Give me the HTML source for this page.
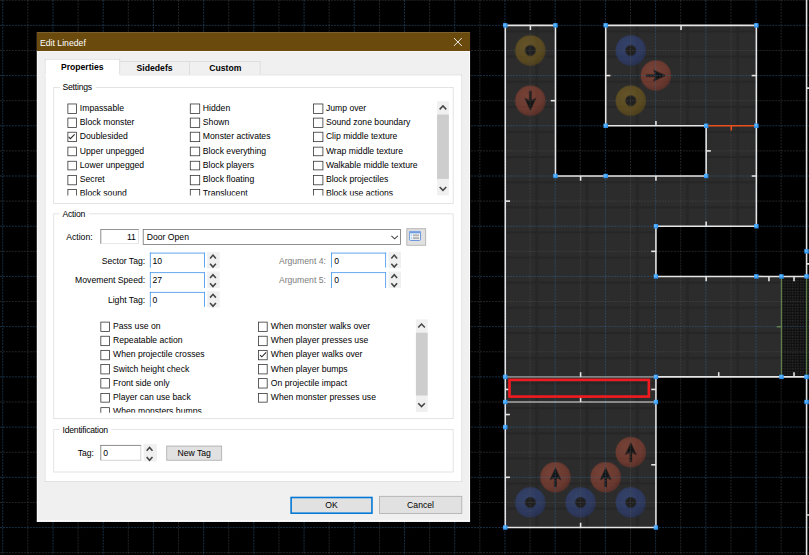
<!DOCTYPE html>
<html><head><meta charset="utf-8"><title>Edit Linedef</title>
<style>
html,body{margin:0;padding:0;background:#000;width:809px;height:555px;overflow:hidden}
#stage{position:absolute;left:0;top:0;width:1031px;height:708px;transform:scale(0.7847);transform-origin:0 0;font-family:"Liberation Sans",sans-serif;font-size:11px;color:#000}
.t{position:absolute;white-space:nowrap;line-height:13px;height:13px}
.cb{position:absolute;width:12.6px;height:12.6px;box-sizing:border-box;border:1.1px solid #333;background:#fff}
</style></head><body>
<div id="stage">
<svg width="1031" height="708" viewBox="0 0 1031 708" style="position:absolute;left:0;top:0">
<defs>
<pattern id="flr" width="64" height="32" patternUnits="userSpaceOnUse" x="682.1" y="6.8">
<rect width="64" height="32" fill="#2c2c2c"/>
<rect x="0" y="0" width="4" height="32" fill="#272727"/>
<rect x="0" y="0" width="64" height="3" fill="#262626"/>
</pattern>
<pattern id="grate" width="3.3" height="3.4" patternUnits="userSpaceOnUse" x="3" y="0">
<rect width="3.3" height="3.4" fill="#101010"/><rect x="0" y="0" width="1.7" height="1.7" fill="#2c2c2c"/>
</pattern>
<radialGradient id="gY" cx="0.4" cy="0.35" r="0.7"><stop offset="0" stop-color="#967628"/><stop offset="0.7" stop-color="#80631a"/><stop offset="1" stop-color="#644e14"/></radialGradient>
<radialGradient id="gR" cx="0.4" cy="0.35" r="0.7"><stop offset="0" stop-color="#b45642"/><stop offset="0.7" stop-color="#9d4533"/><stop offset="1" stop-color="#783428"/></radialGradient>
<radialGradient id="gB" cx="0.4" cy="0.35" r="0.7"><stop offset="0" stop-color="#3e569c"/><stop offset="0.7" stop-color="#314587"/><stop offset="1" stop-color="#263668"/></radialGradient>
</defs>
<rect width="1031" height="708" fill="#000"/>
<polygon points="643.5,32.3 707.5,32.3 707.5,224.3 899.5,224.3 899.5,160.3 771.5,160.3 771.5,32.3 963.5,32.3 963.5,288.3 835.5,288.3 835.5,352.3 995.5,352.3 995.5,480.3 835.5,480.3 835.5,672.3 643.5,672.3" fill="url(#flr)"/>
<polygon points="995.5,352.3 1033.9,352.3 1033.9,480.3 995.5,480.3" fill="url(#grate)"/>
<g opacity="0.56">
<circle cx="675.8" cy="64.3" r="19.4" fill="url(#gY)"/><circle cx="675.8" cy="64.3" r="6.9" fill="#181818"/>
<circle cx="675.8" cy="128.3" r="19.4" fill="url(#gR)"/>
<g transform="translate(675.8 128.3) rotate(90)" fill="#050505"><rect x="-12.4" y="-1.5" width="13" height="3"/><path d="M12.8 0 L-3.7 -7.6 L0 0 L-3.7 7.6 Z"/></g>
<circle cx="803.8" cy="64.3" r="19.4" fill="url(#gB)"/><circle cx="803.8" cy="64.3" r="6.9" fill="#181818"/>
<circle cx="803.8" cy="128.3" r="19.4" fill="url(#gY)"/><circle cx="803.8" cy="128.3" r="6.9" fill="#181818"/>
<circle cx="835.8" cy="96.3" r="19.4" fill="url(#gR)"/>
<g transform="translate(835.8 96.3) rotate(0)" fill="#050505"><rect x="-12.4" y="-1.5" width="13" height="3"/><path d="M12.8 0 L-3.7 -7.6 L0 0 L-3.7 7.6 Z"/></g>
<circle cx="675.8" cy="640.3" r="19.4" fill="url(#gB)"/><circle cx="675.8" cy="640.3" r="6.9" fill="#181818"/>
<circle cx="739.8" cy="640.3" r="19.4" fill="url(#gB)"/><circle cx="739.8" cy="640.3" r="6.9" fill="#181818"/>
<circle cx="803.8" cy="640.3" r="19.4" fill="url(#gB)"/><circle cx="803.8" cy="640.3" r="6.9" fill="#181818"/>
<circle cx="707.8" cy="608.3" r="19.4" fill="url(#gR)"/>
<g transform="translate(707.8 608.3) rotate(-90)" fill="#050505"><rect x="-12.4" y="-1.5" width="13" height="3"/><path d="M12.8 0 L-3.7 -7.6 L0 0 L-3.7 7.6 Z"/></g>
<circle cx="771.8" cy="608.3" r="19.4" fill="url(#gR)"/>
<g transform="translate(771.8 608.3) rotate(-90)" fill="#050505"><rect x="-12.4" y="-1.5" width="13" height="3"/><path d="M12.8 0 L-3.7 -7.6 L0 0 L-3.7 7.6 Z"/></g>
<circle cx="803.8" cy="576.3" r="19.4" fill="url(#gR)"/>
<g transform="translate(803.8 576.3) rotate(-90)" fill="#050505"><rect x="-12.4" y="-1.5" width="13" height="3"/><path d="M12.8 0 L-3.7 -7.6 L0 0 L-3.7 7.6 Z"/></g>
</g>
<line x1="3.5" y1="0" x2="3.5" y2="708" stroke="#366c9a" stroke-opacity="0.57" stroke-width="1" stroke-dasharray="2.5 1.3"/>
<line x1="35.5" y1="0" x2="35.5" y2="708" stroke="#515151" stroke-opacity="0.57" stroke-width="1" stroke-dasharray="2.5 1.3"/>
<line x1="67.5" y1="0" x2="67.5" y2="708" stroke="#366c9a" stroke-opacity="0.57" stroke-width="1" stroke-dasharray="2.5 1.3"/>
<line x1="99.5" y1="0" x2="99.5" y2="708" stroke="#515151" stroke-opacity="0.57" stroke-width="1" stroke-dasharray="2.5 1.3"/>
<line x1="131.5" y1="0" x2="131.5" y2="708" stroke="#366c9a" stroke-opacity="0.57" stroke-width="1" stroke-dasharray="2.5 1.3"/>
<line x1="163.5" y1="0" x2="163.5" y2="708" stroke="#515151" stroke-opacity="0.57" stroke-width="1" stroke-dasharray="2.5 1.3"/>
<line x1="195.5" y1="0" x2="195.5" y2="708" stroke="#366c9a" stroke-opacity="0.57" stroke-width="1" stroke-dasharray="2.5 1.3"/>
<line x1="227.5" y1="0" x2="227.5" y2="708" stroke="#515151" stroke-opacity="0.57" stroke-width="1" stroke-dasharray="2.5 1.3"/>
<line x1="259.5" y1="0" x2="259.5" y2="708" stroke="#366c9a" stroke-opacity="0.57" stroke-width="1" stroke-dasharray="2.5 1.3"/>
<line x1="291.5" y1="0" x2="291.5" y2="708" stroke="#515151" stroke-opacity="0.57" stroke-width="1" stroke-dasharray="2.5 1.3"/>
<line x1="323.5" y1="0" x2="323.5" y2="708" stroke="#366c9a" stroke-opacity="0.57" stroke-width="1" stroke-dasharray="2.5 1.3"/>
<line x1="355.5" y1="0" x2="355.5" y2="708" stroke="#515151" stroke-opacity="0.57" stroke-width="1" stroke-dasharray="2.5 1.3"/>
<line x1="387.5" y1="0" x2="387.5" y2="708" stroke="#366c9a" stroke-opacity="0.57" stroke-width="1" stroke-dasharray="2.5 1.3"/>
<line x1="419.5" y1="0" x2="419.5" y2="708" stroke="#515151" stroke-opacity="0.57" stroke-width="1" stroke-dasharray="2.5 1.3"/>
<line x1="451.5" y1="0" x2="451.5" y2="708" stroke="#366c9a" stroke-opacity="0.57" stroke-width="1" stroke-dasharray="2.5 1.3"/>
<line x1="483.5" y1="0" x2="483.5" y2="708" stroke="#515151" stroke-opacity="0.57" stroke-width="1" stroke-dasharray="2.5 1.3"/>
<line x1="515.5" y1="0" x2="515.5" y2="708" stroke="#366c9a" stroke-opacity="0.57" stroke-width="1" stroke-dasharray="2.5 1.3"/>
<line x1="547.5" y1="0" x2="547.5" y2="708" stroke="#515151" stroke-opacity="0.57" stroke-width="1" stroke-dasharray="2.5 1.3"/>
<line x1="579.5" y1="0" x2="579.5" y2="708" stroke="#366c9a" stroke-opacity="0.57" stroke-width="1" stroke-dasharray="2.5 1.3"/>
<line x1="611.5" y1="0" x2="611.5" y2="708" stroke="#515151" stroke-opacity="0.57" stroke-width="1" stroke-dasharray="2.5 1.3"/>
<line x1="643.5" y1="0" x2="643.5" y2="708" stroke="#366c9a" stroke-opacity="0.57" stroke-width="1" stroke-dasharray="2.5 1.3"/>
<line x1="675.5" y1="0" x2="675.5" y2="708" stroke="#515151" stroke-opacity="0.57" stroke-width="1" stroke-dasharray="2.5 1.3"/>
<line x1="707.5" y1="0" x2="707.5" y2="708" stroke="#366c9a" stroke-opacity="0.57" stroke-width="1" stroke-dasharray="2.5 1.3"/>
<line x1="739.5" y1="0" x2="739.5" y2="708" stroke="#515151" stroke-opacity="0.57" stroke-width="1" stroke-dasharray="2.5 1.3"/>
<line x1="771.5" y1="0" x2="771.5" y2="708" stroke="#366c9a" stroke-opacity="0.57" stroke-width="1" stroke-dasharray="2.5 1.3"/>
<line x1="803.5" y1="0" x2="803.5" y2="708" stroke="#515151" stroke-opacity="0.57" stroke-width="1" stroke-dasharray="2.5 1.3"/>
<line x1="835.5" y1="0" x2="835.5" y2="708" stroke="#366c9a" stroke-opacity="0.57" stroke-width="1" stroke-dasharray="2.5 1.3"/>
<line x1="867.5" y1="0" x2="867.5" y2="708" stroke="#515151" stroke-opacity="0.57" stroke-width="1" stroke-dasharray="2.5 1.3"/>
<line x1="899.5" y1="0" x2="899.5" y2="708" stroke="#366c9a" stroke-opacity="0.57" stroke-width="1" stroke-dasharray="2.5 1.3"/>
<line x1="931.5" y1="0" x2="931.5" y2="708" stroke="#515151" stroke-opacity="0.57" stroke-width="1" stroke-dasharray="2.5 1.3"/>
<line x1="963.5" y1="0" x2="963.5" y2="708" stroke="#366c9a" stroke-opacity="0.57" stroke-width="1" stroke-dasharray="2.5 1.3"/>
<line x1="995.5" y1="0" x2="995.5" y2="708" stroke="#515151" stroke-opacity="0.57" stroke-width="1" stroke-dasharray="2.5 1.3"/>
<line x1="1027.5" y1="0" x2="1027.5" y2="708" stroke="#366c9a" stroke-opacity="0.57" stroke-width="1" stroke-dasharray="2.5 1.3"/>
<line x1="1059.5" y1="0" x2="1059.5" y2="708" stroke="#515151" stroke-opacity="0.57" stroke-width="1" stroke-dasharray="2.5 1.3"/>
<line x1="0" y1="0.3" x2="1031" y2="0.3" stroke="#515151" stroke-opacity="0.57" stroke-width="1" stroke-dasharray="2.5 1.3"/>
<line x1="0" y1="32.3" x2="1031" y2="32.3" stroke="#366c9a" stroke-opacity="0.57" stroke-width="1" stroke-dasharray="2.5 1.3"/>
<line x1="0" y1="64.3" x2="1031" y2="64.3" stroke="#515151" stroke-opacity="0.57" stroke-width="1" stroke-dasharray="2.5 1.3"/>
<line x1="0" y1="96.3" x2="1031" y2="96.3" stroke="#366c9a" stroke-opacity="0.57" stroke-width="1" stroke-dasharray="2.5 1.3"/>
<line x1="0" y1="128.3" x2="1031" y2="128.3" stroke="#515151" stroke-opacity="0.57" stroke-width="1" stroke-dasharray="2.5 1.3"/>
<line x1="0" y1="160.3" x2="1031" y2="160.3" stroke="#366c9a" stroke-opacity="0.57" stroke-width="1" stroke-dasharray="2.5 1.3"/>
<line x1="0" y1="192.3" x2="1031" y2="192.3" stroke="#515151" stroke-opacity="0.57" stroke-width="1" stroke-dasharray="2.5 1.3"/>
<line x1="0" y1="224.3" x2="1031" y2="224.3" stroke="#366c9a" stroke-opacity="0.57" stroke-width="1" stroke-dasharray="2.5 1.3"/>
<line x1="0" y1="256.3" x2="1031" y2="256.3" stroke="#515151" stroke-opacity="0.57" stroke-width="1" stroke-dasharray="2.5 1.3"/>
<line x1="0" y1="288.3" x2="1031" y2="288.3" stroke="#366c9a" stroke-opacity="0.57" stroke-width="1" stroke-dasharray="2.5 1.3"/>
<line x1="0" y1="320.3" x2="1031" y2="320.3" stroke="#515151" stroke-opacity="0.57" stroke-width="1" stroke-dasharray="2.5 1.3"/>
<line x1="0" y1="352.3" x2="1031" y2="352.3" stroke="#366c9a" stroke-opacity="0.57" stroke-width="1" stroke-dasharray="2.5 1.3"/>
<line x1="0" y1="384.3" x2="1031" y2="384.3" stroke="#515151" stroke-opacity="0.57" stroke-width="1" stroke-dasharray="2.5 1.3"/>
<line x1="0" y1="416.3" x2="1031" y2="416.3" stroke="#366c9a" stroke-opacity="0.57" stroke-width="1" stroke-dasharray="2.5 1.3"/>
<line x1="0" y1="448.3" x2="1031" y2="448.3" stroke="#515151" stroke-opacity="0.57" stroke-width="1" stroke-dasharray="2.5 1.3"/>
<line x1="0" y1="480.3" x2="1031" y2="480.3" stroke="#366c9a" stroke-opacity="0.57" stroke-width="1" stroke-dasharray="2.5 1.3"/>
<line x1="0" y1="512.3" x2="1031" y2="512.3" stroke="#515151" stroke-opacity="0.57" stroke-width="1" stroke-dasharray="2.5 1.3"/>
<line x1="0" y1="544.3" x2="1031" y2="544.3" stroke="#366c9a" stroke-opacity="0.57" stroke-width="1" stroke-dasharray="2.5 1.3"/>
<line x1="0" y1="576.3" x2="1031" y2="576.3" stroke="#515151" stroke-opacity="0.57" stroke-width="1" stroke-dasharray="2.5 1.3"/>
<line x1="0" y1="608.3" x2="1031" y2="608.3" stroke="#366c9a" stroke-opacity="0.57" stroke-width="1" stroke-dasharray="2.5 1.3"/>
<line x1="0" y1="640.3" x2="1031" y2="640.3" stroke="#515151" stroke-opacity="0.57" stroke-width="1" stroke-dasharray="2.5 1.3"/>
<line x1="0" y1="672.3" x2="1031" y2="672.3" stroke="#366c9a" stroke-opacity="0.57" stroke-width="1" stroke-dasharray="2.5 1.3"/>
<line x1="0" y1="704.3" x2="1031" y2="704.3" stroke="#515151" stroke-opacity="0.57" stroke-width="1" stroke-dasharray="2.5 1.3"/>
<line x1="0" y1="736.3" x2="1031" y2="736.3" stroke="#366c9a" stroke-opacity="0.57" stroke-width="1" stroke-dasharray="2.5 1.3"/>
<line x1="643.9" y1="32.3" x2="707.9" y2="32.3" stroke="#e6e6e6" stroke-width="2"/>
<line x1="707.9" y1="32.3" x2="707.9" y2="224.3" stroke="#e6e6e6" stroke-width="2"/>
<line x1="707.9" y1="224.3" x2="771.9" y2="224.3" stroke="#e6e6e6" stroke-width="2"/>
<line x1="771.9" y1="224.3" x2="899.9" y2="224.3" stroke="#e6e6e6" stroke-width="2"/>
<line x1="899.9" y1="224.3" x2="899.9" y2="160.3" stroke="#e6e6e6" stroke-width="2"/>
<line x1="771.9" y1="160.3" x2="899.9" y2="160.3" stroke="#e6e6e6" stroke-width="2"/>
<line x1="771.9" y1="32.3" x2="771.9" y2="160.3" stroke="#e6e6e6" stroke-width="2"/>
<line x1="771.9" y1="32.3" x2="963.9" y2="32.3" stroke="#e6e6e6" stroke-width="2"/>
<line x1="963.9" y1="32.3" x2="963.9" y2="160.3" stroke="#e6e6e6" stroke-width="2"/>
<line x1="963.9" y1="160.3" x2="963.9" y2="288.3" stroke="#e6e6e6" stroke-width="2"/>
<line x1="835.9" y1="288.3" x2="963.9" y2="288.3" stroke="#e6e6e6" stroke-width="2"/>
<line x1="835.9" y1="288.3" x2="835.9" y2="352.3" stroke="#e6e6e6" stroke-width="2"/>
<line x1="835.9" y1="352.3" x2="963.9" y2="352.3" stroke="#e6e6e6" stroke-width="2"/>
<line x1="963.9" y1="352.3" x2="995.9" y2="352.3" stroke="#e6e6e6" stroke-width="2"/>
<line x1="995.9" y1="352.3" x2="1027.9" y2="352.3" stroke="#e6e6e6" stroke-width="2"/>
<line x1="1027.9" y1="-31.7" x2="1027.9" y2="320.3" stroke="#e6e6e6" stroke-width="2"/>
<line x1="1027.9" y1="320.3" x2="1027.9" y2="352.3" stroke="#e6e6e6" stroke-width="2"/>
<line x1="835.9" y1="480.3" x2="995.9" y2="480.3" stroke="#e6e6e6" stroke-width="2"/>
<line x1="995.9" y1="480.3" x2="1027.9" y2="480.3" stroke="#e6e6e6" stroke-width="2"/>
<line x1="1027.9" y1="480.3" x2="1027.9" y2="512.3" stroke="#e6e6e6" stroke-width="2"/>
<line x1="1027.9" y1="512.3" x2="1027.9" y2="736.3" stroke="#e6e6e6" stroke-width="2"/>
<line x1="643.9" y1="32.3" x2="643.9" y2="480.3" stroke="#e6e6e6" stroke-width="2"/>
<line x1="643.9" y1="480.3" x2="643.9" y2="512.3" stroke="#e6e6e6" stroke-width="2"/>
<line x1="643.9" y1="512.3" x2="643.9" y2="544.3" stroke="#e6e6e6" stroke-width="2"/>
<line x1="643.9" y1="544.3" x2="643.9" y2="672.3" stroke="#e6e6e6" stroke-width="2"/>
<line x1="835.9" y1="480.3" x2="835.9" y2="512.3" stroke="#e6e6e6" stroke-width="2"/>
<line x1="835.9" y1="512.3" x2="835.9" y2="672.3" stroke="#e6e6e6" stroke-width="2"/>
<line x1="643.9" y1="672.3" x2="835.9" y2="672.3" stroke="#e6e6e6" stroke-width="2"/>
<line x1="899.9" y1="160.3" x2="963.9" y2="160.3" stroke="#e8501c" stroke-width="2"/>
<line x1="643.9" y1="480.3" x2="835.9" y2="480.3" stroke="#808585" stroke-width="2.4"/>
<line x1="643.9" y1="512.3" x2="835.9" y2="512.3" stroke="#a8a8a8" stroke-width="1.7"/>
<line x1="995.9" y1="352.3" x2="995.9" y2="480.3" stroke="#5f7f4c" stroke-width="1.6"/>
<line x1="1027.9" y1="352.3" x2="1027.9" y2="480.3" stroke="#5f7f4c" stroke-width="1.6"/>
<line x1="675.9" y1="32.3" x2="675.9" y2="38.3" stroke="#e6e6e6" stroke-width="2"/>
<line x1="707.9" y1="128.3" x2="701.9" y2="128.3" stroke="#e6e6e6" stroke-width="2"/>
<line x1="739.9" y1="224.3" x2="739.9" y2="230.3" stroke="#e6e6e6" stroke-width="2"/>
<line x1="835.9" y1="224.3" x2="835.9" y2="230.3" stroke="#e6e6e6" stroke-width="2"/>
<line x1="899.9" y1="192.3" x2="905.9" y2="192.3" stroke="#e6e6e6" stroke-width="2"/>
<line x1="835.9" y1="160.3" x2="835.9" y2="154.3" stroke="#e6e6e6" stroke-width="2"/>
<line x1="771.9" y1="96.3" x2="777.9" y2="96.3" stroke="#e6e6e6" stroke-width="2"/>
<line x1="867.9" y1="32.3" x2="867.9" y2="38.3" stroke="#e6e6e6" stroke-width="2"/>
<line x1="963.9" y1="96.3" x2="957.9" y2="96.3" stroke="#e6e6e6" stroke-width="2"/>
<line x1="963.9" y1="224.3" x2="957.9" y2="224.3" stroke="#e6e6e6" stroke-width="2"/>
<line x1="899.9" y1="288.3" x2="899.9" y2="282.3" stroke="#e6e6e6" stroke-width="2"/>
<line x1="835.9" y1="320.3" x2="829.9" y2="320.3" stroke="#e6e6e6" stroke-width="2"/>
<line x1="899.9" y1="352.3" x2="899.9" y2="358.3" stroke="#e6e6e6" stroke-width="2"/>
<line x1="979.9" y1="352.3" x2="979.9" y2="358.3" stroke="#e6e6e6" stroke-width="2"/>
<line x1="1011.9" y1="352.3" x2="1011.9" y2="358.3" stroke="#e6e6e6" stroke-width="2"/>
<line x1="1027.9" y1="112.3" x2="1033.9" y2="112.3" stroke="#e6e6e6" stroke-width="2"/>
<line x1="1027.9" y1="336.3" x2="1033.9" y2="336.3" stroke="#e6e6e6" stroke-width="2"/>
<line x1="739.9" y1="480.3" x2="739.9" y2="474.3" stroke="#e6e6e6" stroke-width="2"/>
<line x1="915.9" y1="480.3" x2="915.9" y2="474.3" stroke="#e6e6e6" stroke-width="2"/>
<line x1="1011.9" y1="480.3" x2="1011.9" y2="474.3" stroke="#e6e6e6" stroke-width="2"/>
<line x1="643.9" y1="256.3" x2="649.9" y2="256.3" stroke="#e6e6e6" stroke-width="2"/>
<line x1="643.9" y1="528.3" x2="649.9" y2="528.3" stroke="#e6e6e6" stroke-width="2"/>
<line x1="643.9" y1="608.3" x2="649.9" y2="608.3" stroke="#e6e6e6" stroke-width="2"/>
<line x1="739.9" y1="512.3" x2="739.9" y2="506.3" stroke="#e6e6e6" stroke-width="2"/>
<line x1="643.9" y1="496.3" x2="649.9" y2="496.3" stroke="#e6e6e6" stroke-width="2"/>
<line x1="835.9" y1="496.3" x2="829.9" y2="496.3" stroke="#e6e6e6" stroke-width="2"/>
<line x1="835.9" y1="592.3" x2="829.9" y2="592.3" stroke="#e6e6e6" stroke-width="2"/>
<line x1="739.9" y1="672.3" x2="739.9" y2="666.3" stroke="#e6e6e6" stroke-width="2"/>
<line x1="1027.9" y1="656.3" x2="1033.9" y2="656.3" stroke="#e6e6e6" stroke-width="2"/>
<line x1="931.9" y1="160.3" x2="931.9" y2="166.3" stroke="#e8501c" stroke-width="2"/>
<line x1="995.9" y1="416.3" x2="989.9" y2="416.3" stroke="#5f7f4c" stroke-width="2"/>
<rect x="649.3" y="484.1" width="177.6" height="21.3" fill="none" stroke="#ee1c20" stroke-width="3.4"/>
<rect x="641.1" y="29.5" width="5.6" height="5.6" fill="#2f93ee"/>
<rect x="641.5" y="29.9" width="3.4" height="3.4" fill="#5cb6ff"/>
<rect x="705.1" y="29.5" width="5.6" height="5.6" fill="#2f93ee"/>
<rect x="705.5" y="29.9" width="3.4" height="3.4" fill="#5cb6ff"/>
<rect x="769.1" y="29.5" width="5.6" height="5.6" fill="#2f93ee"/>
<rect x="769.5" y="29.9" width="3.4" height="3.4" fill="#5cb6ff"/>
<rect x="961.1" y="29.5" width="5.6" height="5.6" fill="#2f93ee"/>
<rect x="961.5" y="29.9" width="3.4" height="3.4" fill="#5cb6ff"/>
<rect x="769.1" y="157.5" width="5.6" height="5.6" fill="#2f93ee"/>
<rect x="769.5" y="157.9" width="3.4" height="3.4" fill="#5cb6ff"/>
<rect x="897.1" y="157.5" width="5.6" height="5.6" fill="#2f93ee"/>
<rect x="897.5" y="157.9" width="3.4" height="3.4" fill="#5cb6ff"/>
<rect x="961.1" y="157.5" width="5.6" height="5.6" fill="#2f93ee"/>
<rect x="961.5" y="157.9" width="3.4" height="3.4" fill="#5cb6ff"/>
<rect x="705.1" y="221.5" width="5.6" height="5.6" fill="#2f93ee"/>
<rect x="705.5" y="221.9" width="3.4" height="3.4" fill="#5cb6ff"/>
<rect x="769.1" y="221.5" width="5.6" height="5.6" fill="#2f93ee"/>
<rect x="769.5" y="221.9" width="3.4" height="3.4" fill="#5cb6ff"/>
<rect x="897.1" y="221.5" width="5.6" height="5.6" fill="#2f93ee"/>
<rect x="897.5" y="221.9" width="3.4" height="3.4" fill="#5cb6ff"/>
<rect x="833.1" y="285.5" width="5.6" height="5.6" fill="#2f93ee"/>
<rect x="833.5" y="285.9" width="3.4" height="3.4" fill="#5cb6ff"/>
<rect x="961.1" y="285.5" width="5.6" height="5.6" fill="#2f93ee"/>
<rect x="961.5" y="285.9" width="3.4" height="3.4" fill="#5cb6ff"/>
<rect x="1025.1" y="317.5" width="5.6" height="5.6" fill="#2f93ee"/>
<rect x="1025.5" y="317.9" width="3.4" height="3.4" fill="#5cb6ff"/>
<rect x="833.1" y="349.5" width="5.6" height="5.6" fill="#2f93ee"/>
<rect x="833.5" y="349.9" width="3.4" height="3.4" fill="#5cb6ff"/>
<rect x="961.1" y="349.5" width="5.6" height="5.6" fill="#2f93ee"/>
<rect x="961.5" y="349.9" width="3.4" height="3.4" fill="#5cb6ff"/>
<rect x="993.1" y="349.5" width="5.6" height="5.6" fill="#2f93ee"/>
<rect x="993.5" y="349.9" width="3.4" height="3.4" fill="#5cb6ff"/>
<rect x="1025.1" y="349.5" width="5.6" height="5.6" fill="#2f93ee"/>
<rect x="1025.5" y="349.9" width="3.4" height="3.4" fill="#5cb6ff"/>
<rect x="641.1" y="477.5" width="5.6" height="5.6" fill="#2f93ee"/>
<rect x="641.5" y="477.9" width="3.4" height="3.4" fill="#5cb6ff"/>
<rect x="833.1" y="477.5" width="5.6" height="5.6" fill="#2f93ee"/>
<rect x="833.5" y="477.9" width="3.4" height="3.4" fill="#5cb6ff"/>
<rect x="993.1" y="477.5" width="5.6" height="5.6" fill="#2f93ee"/>
<rect x="993.5" y="477.9" width="3.4" height="3.4" fill="#5cb6ff"/>
<rect x="1025.1" y="477.5" width="5.6" height="5.6" fill="#2f93ee"/>
<rect x="1025.5" y="477.9" width="3.4" height="3.4" fill="#5cb6ff"/>
<rect x="641.1" y="509.5" width="5.6" height="5.6" fill="#2f93ee"/>
<rect x="641.5" y="509.9" width="3.4" height="3.4" fill="#5cb6ff"/>
<rect x="833.1" y="509.5" width="5.6" height="5.6" fill="#2f93ee"/>
<rect x="833.5" y="509.9" width="3.4" height="3.4" fill="#5cb6ff"/>
<rect x="1025.1" y="509.5" width="5.6" height="5.6" fill="#2f93ee"/>
<rect x="1025.5" y="509.9" width="3.4" height="3.4" fill="#5cb6ff"/>
<rect x="641.1" y="541.5" width="5.6" height="5.6" fill="#2f93ee"/>
<rect x="641.5" y="541.9" width="3.4" height="3.4" fill="#5cb6ff"/>
<rect x="641.1" y="669.5" width="5.6" height="5.6" fill="#2f93ee"/>
<rect x="641.5" y="669.9" width="3.4" height="3.4" fill="#5cb6ff"/>
<rect x="833.1" y="669.5" width="5.6" height="5.6" fill="#2f93ee"/>
<rect x="833.5" y="669.9" width="3.4" height="3.4" fill="#5cb6ff"/>
</svg>
<div style="position:absolute;left:46.8px;top:40.6px;width:552.6px;height:624.1px;background:#f0f0f0"></div>
<div style="position:absolute;left:46.8px;top:64.8px;width:1.1px;height:599.9px;background:#fff"></div>
<div style="position:absolute;left:598.3px;top:64.8px;width:1.1px;height:599.9px;background:#fff"></div>
<div style="position:absolute;left:46.8px;top:663.3px;width:552.6px;height:1.4px;background:#fdfdfd"></div>
<div style="position:absolute;left:46.8px;top:64.8px;width:552.6px;height:1.0px;background:#fbfbfb"></div>
<div style="position:absolute;left:46.8px;top:40.6px;width:552.6px;height:24.2px;background:#6b4a0e"></div>
<div class="t" style="left:50.8px;top:46.1px;color:#fff;font-size:12.6px;line-height:16px;height:16px;transform:scaleX(0.877);transform-origin:0 0">Edit Linedef</div>
<svg style="position:absolute;left:577.7px;top:47.6px" width="11" height="11" viewBox="0 0 11 11"><path d="M0.5 0.5 L10.5 10.5 M10.5 0.5 L0.5 10.5" stroke="#fff" stroke-width="1.15" fill="none"/></svg>
<div style="position:absolute;left:56.8px;top:94.6px;width:531.8px;height:519.8px;background:#fff;border:1px solid #dadada;border-top:none;box-sizing:border-box"></div>
<div style="position:absolute;left:152.6px;top:94.6px;width:436.0px;height:1.0px;background:#dadada"></div>
<div style="position:absolute;left:152.0px;top:78.0px;width:90.0px;height:16.7px;background:#f0f0f0;border:1px solid #d9d9d9;border-bottom:none;box-sizing:border-box"></div>
<div style="position:absolute;left:241.0px;top:78.0px;width:91.0px;height:16.7px;background:#f0f0f0;border:1px solid #d9d9d9;border-bottom:none;box-sizing:border-box"></div>
<div style="position:absolute;left:56.8px;top:75.4px;width:96.0px;height:19.8px;background:#fff;border:1px solid #d9d9d9;border-bottom:none;box-sizing:border-box"></div>
<div style="position:absolute;left:57.8px;top:93.6px;width:94.0px;height:4.0px;background:#fff"></div>
<div class="t" style="left:56.8px;top:79.4px;width:96px;text-align:center;font-weight:bold">Properties</div>
<div class="t" style="left:152.0px;top:80.4px;width:90px;text-align:center;font-weight:bold">Sidedefs</div>
<div class="t" style="left:241.6px;top:80.4px;width:91px;text-align:center;font-weight:bold">Custom</div>
<div style="position:absolute;left:68.0px;top:110.6px;width:509.6px;height:149.8px;border:1px solid #dcdcdc;box-sizing:border-box"></div>
<div style="position:absolute;left:76.0px;top:104.6px;width:46.0px;height:13.0px;background:#fff"></div>
<div class="t" style="left:79.6px;top:105.3px;letter-spacing:-0.28px">Settings</div>
<div style="position:absolute;left:68.0px;top:272.4px;width:509.6px;height:262.0px;border:1px solid #dcdcdc;box-sizing:border-box"></div>
<div style="position:absolute;left:76.0px;top:266.4px;width:37.0px;height:13.0px;background:#fff"></div>
<div class="t" style="left:79.6px;top:267.1px;letter-spacing:-0.28px">Action</div>
<div style="position:absolute;left:68.0px;top:546.7px;width:509.6px;height:55.8px;border:1px solid #dcdcdc;box-sizing:border-box"></div>
<div style="position:absolute;left:76.0px;top:540.7px;width:66.0px;height:13.0px;background:#fff"></div>
<div class="t" style="left:79.6px;top:542.2px;letter-spacing:-0.28px">Identification</div>
<div style="position:absolute;left:80px;top:125px;width:492px;height:124.0px;overflow:hidden">
<div class="cb" style="left:5.5px;top:7.0px"></div>
<div class="t" style="left:21.7px;top:6.0px;">Impassable</div>
<div class="cb" style="left:162.3px;top:7.0px"></div>
<div class="t" style="left:178.5px;top:6.0px;">Hidden</div>
<div class="cb" style="left:319.1px;top:7.0px"></div>
<div class="t" style="left:335.3px;top:6.0px;">Jump over</div>
<div class="cb" style="left:5.5px;top:25.2px"></div>
<div class="t" style="left:21.7px;top:24.2px;">Block monster</div>
<div class="cb" style="left:162.3px;top:25.2px"></div>
<div class="t" style="left:178.5px;top:24.2px;">Shown</div>
<div class="cb" style="left:319.1px;top:25.2px"></div>
<div class="t" style="left:335.3px;top:24.2px;">Sound zone boundary</div>
<div class="cb" style="left:5.5px;top:43.4px"><svg width="12.6" height="12.6" viewBox="0 0 12.6 12.6" style="position:absolute;left:-1.1px;top:-1.1px"><path d="M2.4 6.5 L4.7 8.7 L10.1 3.1" stroke="#2c2c2c" stroke-width="1.35" fill="none"/></svg></div>
<div class="t" style="left:21.7px;top:42.4px;">Doublesided</div>
<div class="cb" style="left:162.3px;top:43.4px"></div>
<div class="t" style="left:178.5px;top:42.4px;">Monster activates</div>
<div class="cb" style="left:319.1px;top:43.4px"></div>
<div class="t" style="left:335.3px;top:42.4px;">Clip middle texture</div>
<div class="cb" style="left:5.5px;top:61.6px"></div>
<div class="t" style="left:21.7px;top:60.6px;">Upper unpegged</div>
<div class="cb" style="left:162.3px;top:61.6px"></div>
<div class="t" style="left:178.5px;top:60.6px;">Block everything</div>
<div class="cb" style="left:319.1px;top:61.6px"></div>
<div class="t" style="left:335.3px;top:60.6px;">Wrap middle texture</div>
<div class="cb" style="left:5.5px;top:79.8px"></div>
<div class="t" style="left:21.7px;top:78.8px;">Lower unpegged</div>
<div class="cb" style="left:162.3px;top:79.8px"></div>
<div class="t" style="left:178.5px;top:78.8px;">Block players</div>
<div class="cb" style="left:319.1px;top:79.8px"></div>
<div class="t" style="left:335.3px;top:78.8px;">Walkable middle texture</div>
<div class="cb" style="left:5.5px;top:98.0px"></div>
<div class="t" style="left:21.7px;top:97.0px;">Secret</div>
<div class="cb" style="left:162.3px;top:98.0px"></div>
<div class="t" style="left:178.5px;top:97.0px;">Block floating</div>
<div class="cb" style="left:319.1px;top:98.0px"></div>
<div class="t" style="left:335.3px;top:97.0px;">Block projectiles</div>
<div class="cb" style="left:5.5px;top:116.2px"></div>
<div class="t" style="left:21.7px;top:115.2px;">Block sound</div>
<div class="cb" style="left:162.3px;top:116.2px"></div>
<div class="t" style="left:178.5px;top:115.2px;">Translucent</div>
<div class="cb" style="left:319.1px;top:116.2px"></div>
<div class="t" style="left:335.3px;top:115.2px;">Block use actions</div>
</div>
<div style="position:absolute;left:557.0px;top:129.4px;width:15.0px;height:119.6px;background:#f0f0f0"></div>
<div style="position:absolute;left:557.0px;top:146.2px;width:15.0px;height:81.5px;background:#cdcdcd"></div>
<svg style="position:absolute;left:557.0px;top:129.4px;overflow:visible" width="15.0" height="119.6"><path d="M3.3 10.4 L7.5 6.0 L11.7 10.4" stroke="#454545" stroke-width="1.9" fill="none"/><path d="M3.3 109.2 L7.5 113.6 L11.7 109.2" stroke="#454545" stroke-width="1.9" fill="none"/></svg>
<div class="t" style="left:84.4px;top:295.5px;">Action:</div>
<div style="position:absolute;left:127.8px;top:292.0px;width:49.4px;height:19.4px;border-style:solid;border-width:1.5px 1px 1px 1.9px;border-color:#767676 #dadada #e2e2e2 #6a6a6a;box-sizing:border-box;background:#fff"></div>
<div class="t" style="right:857.8px;top:295.5px;">11</div>
<div style="position:absolute;left:182.0px;top:292.2px;width:329.4px;height:19.4px;border:1px solid #707070;box-sizing:border-box;background:#fff"></div>
<div class="t" style="left:187.0px;top:295.5px;">Door Open</div>
<svg style="position:absolute;left:490px;top:290px;overflow:visible" width="20" height="20"><path d="M8.8 10.7 L12.9 14.3 L17.0 10.7" stroke="#404040" stroke-width="1.3" fill="none"/></svg>
<div style="position:absolute;left:518.0px;top:291.4px;width:24.8px;height:21.8px;border:1px solid #adadad;box-sizing:border-box;background:#e1e1e1"></div>
<svg style="position:absolute;left:521.3px;top:294.2px" width="15.6" height="13" viewBox="0 0 15.6 13"><rect x="0.6" y="0.6" width="14.4" height="11.8" rx="1.6" fill="#fdfdfd" stroke="#5b8ad6" stroke-width="1.2"/><rect x="1" y="1" width="13.6" height="2.4" fill="#6c9be2"/><rect x="2.2" y="4.6" width="1.8" height="2.6" fill="#a8d4f8"/><rect x="2.2" y="8.2" width="1.8" height="2.6" fill="#a8d4f8"/><rect x="5" y="4.6" width="8.2" height="2.6" fill="#b4b4b4"/><rect x="5" y="8.2" width="8.2" height="2.6" fill="#b4b4b4"/></svg>
<div class="t" style="right:846.0px;top:325.5px;">Sector Tag:</div>
<div style="position:absolute;left:190.6px;top:321.9px;width:70.6px;height:19.6px;border:1.3px solid #3b8fe8;border-bottom:none;box-sizing:border-box;background:#fff"></div>
<div class="t" style="left:194.3px;top:325.5px;">10</div>
<div style="position:absolute;left:264.2px;top:321.1px;width:16.0px;height:21.3px;background:#f0f0f0"></div>
<svg style="position:absolute;left:264.2px;top:321.1px;overflow:visible" width="16.0" height="21.3"><path d="M3.7 8.3 L7.4 4.1 L11.1 8.3" stroke="#454545" stroke-width="2.0" fill="none"/><path d="M3.7 15.0 L7.4 19.2 L11.1 15.0" stroke="#454545" stroke-width="2.0" fill="none"/></svg>
<div class="t" style="right:846.0px;top:350.6px;">Movement Speed:</div>
<div style="position:absolute;left:190.6px;top:347.0px;width:70.6px;height:19.6px;border:1.3px solid #3b8fe8;border-bottom:none;box-sizing:border-box;background:#fff"></div>
<div class="t" style="left:194.3px;top:350.6px;">27</div>
<div style="position:absolute;left:264.2px;top:346.2px;width:16.0px;height:21.3px;background:#f0f0f0"></div>
<svg style="position:absolute;left:264.2px;top:346.2px;overflow:visible" width="16.0" height="21.3"><path d="M3.7 8.3 L7.4 4.1 L11.1 8.3" stroke="#454545" stroke-width="2.0" fill="none"/><path d="M3.7 15.0 L7.4 19.2 L11.1 15.0" stroke="#454545" stroke-width="2.0" fill="none"/></svg>
<div class="t" style="right:846.0px;top:375.5px;">Light Tag:</div>
<div style="position:absolute;left:190.6px;top:371.9px;width:70.6px;height:19.6px;border:1.3px solid #3b8fe8;border-bottom:none;box-sizing:border-box;background:#fff"></div>
<div class="t" style="left:194.3px;top:375.5px;">0</div>
<div style="position:absolute;left:264.2px;top:371.1px;width:16.0px;height:21.3px;background:#f0f0f0"></div>
<svg style="position:absolute;left:264.2px;top:371.1px;overflow:visible" width="16.0" height="21.3"><path d="M3.7 8.3 L7.4 4.1 L11.1 8.3" stroke="#454545" stroke-width="2.0" fill="none"/><path d="M3.7 15.0 L7.4 19.2 L11.1 15.0" stroke="#454545" stroke-width="2.0" fill="none"/></svg>
<div class="t" style="right:615.7px;top:325.5px;color:#7c7c7c">Argument 4:</div>
<div style="position:absolute;left:422.3px;top:321.9px;width:69.8px;height:19.6px;border:1.3px solid #3b8fe8;border-bottom:none;box-sizing:border-box;background:#fff"></div>
<div class="t" style="left:426.0px;top:325.5px;">0</div>
<div style="position:absolute;left:495.4px;top:321.1px;width:16.0px;height:21.3px;background:#f0f0f0"></div>
<svg style="position:absolute;left:495.4px;top:321.1px;overflow:visible" width="16.0" height="21.3"><path d="M3.7 8.3 L7.4 4.1 L11.1 8.3" stroke="#454545" stroke-width="2.0" fill="none"/><path d="M3.7 15.0 L7.4 19.2 L11.1 15.0" stroke="#454545" stroke-width="2.0" fill="none"/></svg>
<div class="t" style="right:615.7px;top:350.6px;color:#7c7c7c">Argument 5:</div>
<div style="position:absolute;left:422.3px;top:347.0px;width:69.8px;height:19.6px;border:1.3px solid #3b8fe8;border-bottom:none;box-sizing:border-box;background:#fff"></div>
<div class="t" style="left:426.0px;top:350.6px;">0</div>
<div style="position:absolute;left:495.4px;top:346.2px;width:16.0px;height:21.3px;background:#f0f0f0"></div>
<svg style="position:absolute;left:495.4px;top:346.2px;overflow:visible" width="16.0" height="21.3"><path d="M3.7 8.3 L7.4 4.1 L11.1 8.3" stroke="#454545" stroke-width="2.0" fill="none"/><path d="M3.7 15.0 L7.4 19.2 L11.1 15.0" stroke="#454545" stroke-width="2.0" fill="none"/></svg>
<div style="position:absolute;left:120px;top:400px;width:425px;height:125.9px;overflow:hidden">
<div class="cb" style="left:7.5px;top:10.0px"></div>
<div class="t" style="left:24.0px;top:9.2px;">Pass use on</div>
<div class="cb" style="left:208.8px;top:10.0px"></div>
<div class="t" style="left:225.2px;top:9.2px;">When monster walks over</div>
<div class="cb" style="left:7.5px;top:28.1px"></div>
<div class="t" style="left:24.0px;top:27.3px;">Repeatable action</div>
<div class="cb" style="left:208.8px;top:28.1px"></div>
<div class="t" style="left:225.2px;top:27.3px;">When player presses use</div>
<div class="cb" style="left:7.5px;top:46.2px"></div>
<div class="t" style="left:24.0px;top:45.4px;">When projectile crosses</div>
<div class="cb" style="left:208.8px;top:46.2px"><svg width="12.6" height="12.6" viewBox="0 0 12.6 12.6" style="position:absolute;left:-1.1px;top:-1.1px"><path d="M2.4 6.5 L4.7 8.7 L10.1 3.1" stroke="#2c2c2c" stroke-width="1.35" fill="none"/></svg></div>
<div class="t" style="left:225.2px;top:45.4px;">When player walks over</div>
<div class="cb" style="left:7.5px;top:64.3px"></div>
<div class="t" style="left:24.0px;top:63.5px;">Switch height check</div>
<div class="cb" style="left:208.8px;top:64.3px"></div>
<div class="t" style="left:225.2px;top:63.5px;">When player bumps</div>
<div class="cb" style="left:7.5px;top:82.4px"></div>
<div class="t" style="left:24.0px;top:81.6px;">Front side only</div>
<div class="cb" style="left:208.8px;top:82.4px"></div>
<div class="t" style="left:225.2px;top:81.6px;">On projectile impact</div>
<div class="cb" style="left:7.5px;top:100.5px"></div>
<div class="t" style="left:24.0px;top:99.7px;">Player can use back</div>
<div class="cb" style="left:208.8px;top:100.5px"></div>
<div class="t" style="left:225.2px;top:99.7px;">When monster presses use</div>
<div class="cb" style="left:7.5px;top:118.6px"></div>
<div class="t" style="left:24.0px;top:117.8px;">When monsters bumps</div>
</div>
<div style="position:absolute;left:530.2px;top:407.4px;width:14.4px;height:117.2px;background:#f0f0f0"></div>
<div style="position:absolute;left:530.2px;top:424.2px;width:14.4px;height:79.6px;background:#cdcdcd"></div>
<svg style="position:absolute;left:530.2px;top:407.4px;overflow:visible" width="14.4" height="117.2"><path d="M3.0 10.4 L7.2 6.0 L11.4 10.4" stroke="#454545" stroke-width="1.9" fill="none"/><path d="M3.0 106.8 L7.2 111.2 L11.4 106.8" stroke="#454545" stroke-width="1.9" fill="none"/></svg>
<div class="t" style="right:911.2px;top:571.4px;">Tag:</div>
<div style="position:absolute;left:127.8px;top:567.3px;width:52.3px;height:19.6px;border:1px solid #6e6e6e;border-right-color:#c8c8c8;border-bottom-color:#c8c8c8;box-sizing:border-box;background:#fff"></div>
<div class="t" style="left:131.5px;top:571.4px;">0</div>
<div style="position:absolute;left:183.3px;top:565.9px;width:16.4px;height:22.6px;background:#f0f0f0"></div>
<svg style="position:absolute;left:183.3px;top:565.9px;overflow:visible" width="16.4" height="22.6"><path d="M3.9 8.3 L7.6 4.1 L11.3 8.3" stroke="#454545" stroke-width="2.0" fill="none"/><path d="M3.9 16.3 L7.6 20.5 L11.3 16.3" stroke="#454545" stroke-width="2.0" fill="none"/></svg>
<div style="position:absolute;left:212.0px;top:567.9px;width:71.0px;height:19.2px;border:1px solid #adadad;box-sizing:border-box;background:#e1e1e1"></div>
<div class="t" style="left:212.0px;top:571.4px;width:71px;text-align:center">New Tag</div>
<div style="position:absolute;left:370.0px;top:632.6px;width:105.0px;height:22.3px;border:2px solid #0078d7;box-sizing:border-box;background:#e1e1e1"></div>
<div class="t" style="left:370.0px;top:637.5px;width:105px;text-align:center">OK</div>
<div style="position:absolute;left:482.8px;top:632.4px;width:106.2px;height:22.6px;border:1px solid #adadad;box-sizing:border-box;background:#e1e1e1"></div>
<div class="t" style="left:483.2px;top:637.5px;width:105.5px;text-align:center">Cancel</div>
</div>
</body></html>
